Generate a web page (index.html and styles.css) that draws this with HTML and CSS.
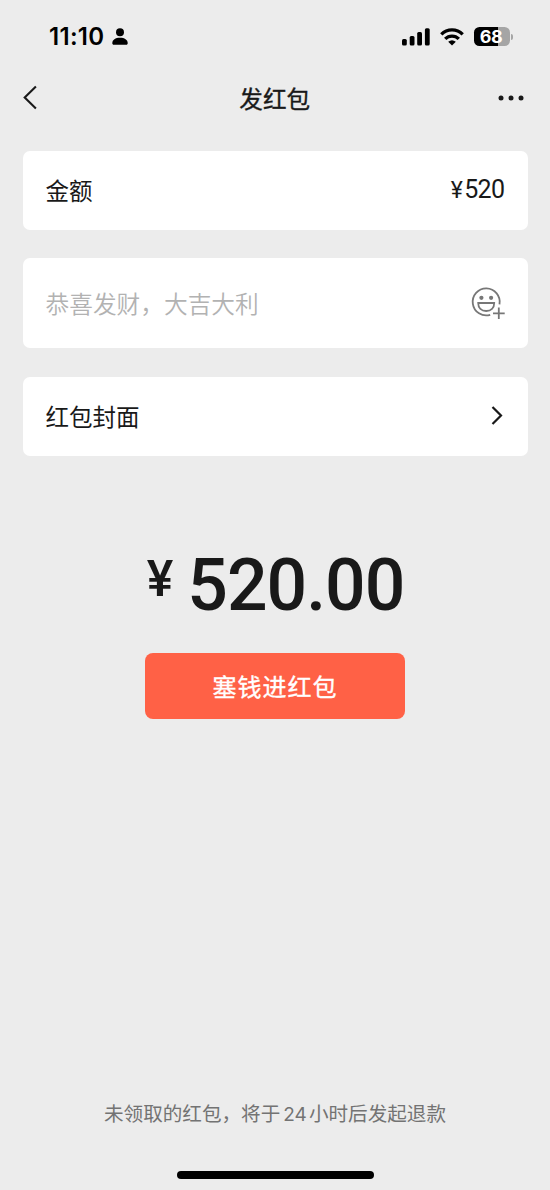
FILE: index.html
```html
<!DOCTYPE html>
<html lang="zh-CN">
<head>
<meta charset="utf-8">
<title>发红包</title>
<link rel="stylesheet" href="styles.css">
</head>
<body>
<div class="screen">
  <div class="status">
    <div class="status-left">
      <span class="time">11:10</span>
      <svg class="person" width="16" height="17" viewBox="0 0 16 17"><circle cx="8" cy="4.3" r="4"/><path d="M.3 15.2C.3 11.800 3.500 9.800 8 9.800s7.700 2 7.700 5.400c0 .9-.5 1.500-1.500 1.500H1.800C.8 16.700.3 16.100.3 15.200z"/></svg>
    </div>
    <div class="status-right">
      <svg width="28" height="18" viewBox="0 0 28 18"><rect x="0" y="11" width="4.800" height="6.500" rx="1.500"/><rect x="7.700" y="8" width="4.800" height="9.500" rx="1.500"/><rect x="15.200" y="4" width="4.800" height="13.500" rx="1.500"/><rect x="22.900" y="0.300" width="4.800" height="17.200" rx="1.500"/></svg>
      <svg class="wifi" width="24" height="18" viewBox="0 0 24 18"><g fill="none" stroke="#000" stroke-width="3.300"><path d="M1.300 6.300a15.200 15.200 0 0 1 21.400 0"/><path d="M5.200 10.900a9.500 9.500 0 0 1 13.600 0"/></g><path d="M12 17.600l-3.800-3.800a5.800 5.800 0 0 1 7.600 0z"/></svg>
      <div class="battery"><span class="level">68</span></div>
      <span class="battery-tip"></span>
    </div>
  </div>

  <div class="nav">
    <svg width="16" height="26" viewBox="0 0 16 26"><path d="M13.900 1.600 2.700 12.600l11.200 11" fill="none" stroke="#191919" stroke-width="2.100"/></svg>
    <h1 class="title">发红包</h1>
    <svg class="more" width="26" height="6" viewBox="0 0 26 6"><circle cx="3" cy="3" r="2.500"/><circle cx="13" cy="3" r="2.500"/><circle cx="23" cy="3" r="2.500"/></svg>
  </div>

  <div class="cards">
    <div class="card"><span class="label">金额</span><span class="value"><span class="value-yen">¥</span>520</span></div>
    <div class="card message"><span class="label hint">恭喜发财，大吉大利</span>
      <svg class="emoji" width="34" height="34" viewBox="0 0 34 34"><g fill="none" stroke="#777" stroke-width="1.800"><path d="M19.200 27.800A13.500 13.500 0 1 1 28.500 17.300"/><path d="M7.200 16h16c0 5-3.200 8-8 8s-8-3-8-8z"/><path d="M27.800 20.500v11.600M22 26.300h11.700"/></g><circle cx="10.400" cy="10.800" r="2.100" fill="#777"/><circle cx="20.100" cy="10.800" r="2.100" fill="#777"/></svg>
    </div>
    <div class="card"><span class="label">红包封面</span>
      <svg class="chevron" width="12" height="20" viewBox="0 0 12 20"><path d="m1.500 1 8.500 8.500-8.500 8.500" fill="none" stroke="#191919" stroke-width="2.200"/></svg>
    </div>
  </div>

  <div class="total"><span class="yen">¥</span><span class="sum">520.00</span></div>
  <button class="send">塞钱进红包</button>

  <div class="note">未领取的红包，将于<span class="hours">24</span>小时后发起退款</div>
  <div class="home"></div>
</div>
</body>
</html>
```
FILE: styles.css
```css
* { box-sizing: border-box; }
body {
  margin: 0;
  background: #ececec;
  color: #191919;
  font-family: "Noto Sans CJK SC", sans-serif;
}
.screen {
  width: 550px;
  height: 1190px;
  display: flex;
  flex-direction: column;
  overflow: hidden;
}
svg { display: block; flex: none; }
.status {
  height: 73px;
  padding: 0 37px 0 49px;
  display: flex;
  align-items: center;
  justify-content: space-between;
  color: #000;
}
.status-left, .status-right { display: flex; align-items: center; }
.time {
  font: 600 24px/28px Inter, sans-serif;
  letter-spacing: 0.300px;
  padding-top: 1px;
}
.person { margin-left: 8px; }
.wifi { margin-left: 10px; }
.battery {
  width: 36px;
  height: 19px;
  margin-left: 10px;
  border-radius: 5.500px;
  background: linear-gradient(90deg, #000 0 24.500px, #a5a5a5 24.500px);
  text-align: center;
}
.level {
  display: block;
  color: #fff;
  font: 700 18px/20px Inter, sans-serif;
  letter-spacing: -0.500px;
  padding-right: 2px;
}
.battery-tip {
  width: 2px;
  height: 6px;
  margin-left: 1px;
  border-radius: 0 3px 3px 0;
  background: #a5a5a5;
}
.nav {
  height: 49px;
  padding: 0 26.500px 0 22px;
  display: grid;
  grid-template-columns: 1fr auto 1fr;
  align-items: center;
}
.title {
  margin: 0 0 0 4px;
  font-size: 23.600px;
  font-weight: 400;
  -webkit-text-stroke: 0.350px #191919;
  line-height: 34px;
}
.more { justify-self: end; fill: #191919; }
.cards {
  padding: 29px 22.500px 0;
  display: flex;
  flex-direction: column;
  gap: 28.400px;
}
.card {
  height: 79px;
  padding: 0 23px;
  display: flex;
  align-items: center;
  justify-content: space-between;
  border-radius: 7px;
  background: #fff;
  font-size: 23.500px;
}
.message { height: 90px; }
.label { padding-bottom: 1px; }
.hint { color: #b2b2b2; font-size: 23.700px; font-weight: 350; }
.value { font: 400 25px/30px Roboto, sans-serif; letter-spacing: -0.600px; }
.value-yen { margin-right: 2px; font-size: 23px; }
.emoji { margin-top: 1px; }
.chevron { margin-right: 2px; }
.total {
  height: 72px;
  margin-top: 93px;
  padding-left: 1px;
  display: flex;
  justify-content: center;
  color: #191919;
  font-family: Roboto, sans-serif;
  font-weight: 500;
}
.yen { font-size: 50px; line-height: 60px; margin-right: 14px; }
.sum { font-size: 71.500px; line-height: 74px; letter-spacing: -1px; }
.send {
  width: 260px;
  height: 66px;
  margin: 32.300px auto 0;
  padding: 0;
  border: 0;
  border-radius: 8px;
  background: #ff6146;
  color: #fff;
  font: 400 24px/36px "Noto Sans CJK SC", sans-serif;
  -webkit-text-stroke: 0.350px #fff;
  letter-spacing: 1px;
}
.note {
  margin-top: auto;
  text-align: center;
  color: #737373;
  font-size: 19.600px;
  line-height: 30px;
}
.hours { font-family: Inter, sans-serif; margin: 0 2px 0 3px; font-size: 19px; }
.home {
  width: 197px;
  height: 8px;
  margin: 41px auto 11px;
  border-radius: 4px;
  background: #000;
}
```
